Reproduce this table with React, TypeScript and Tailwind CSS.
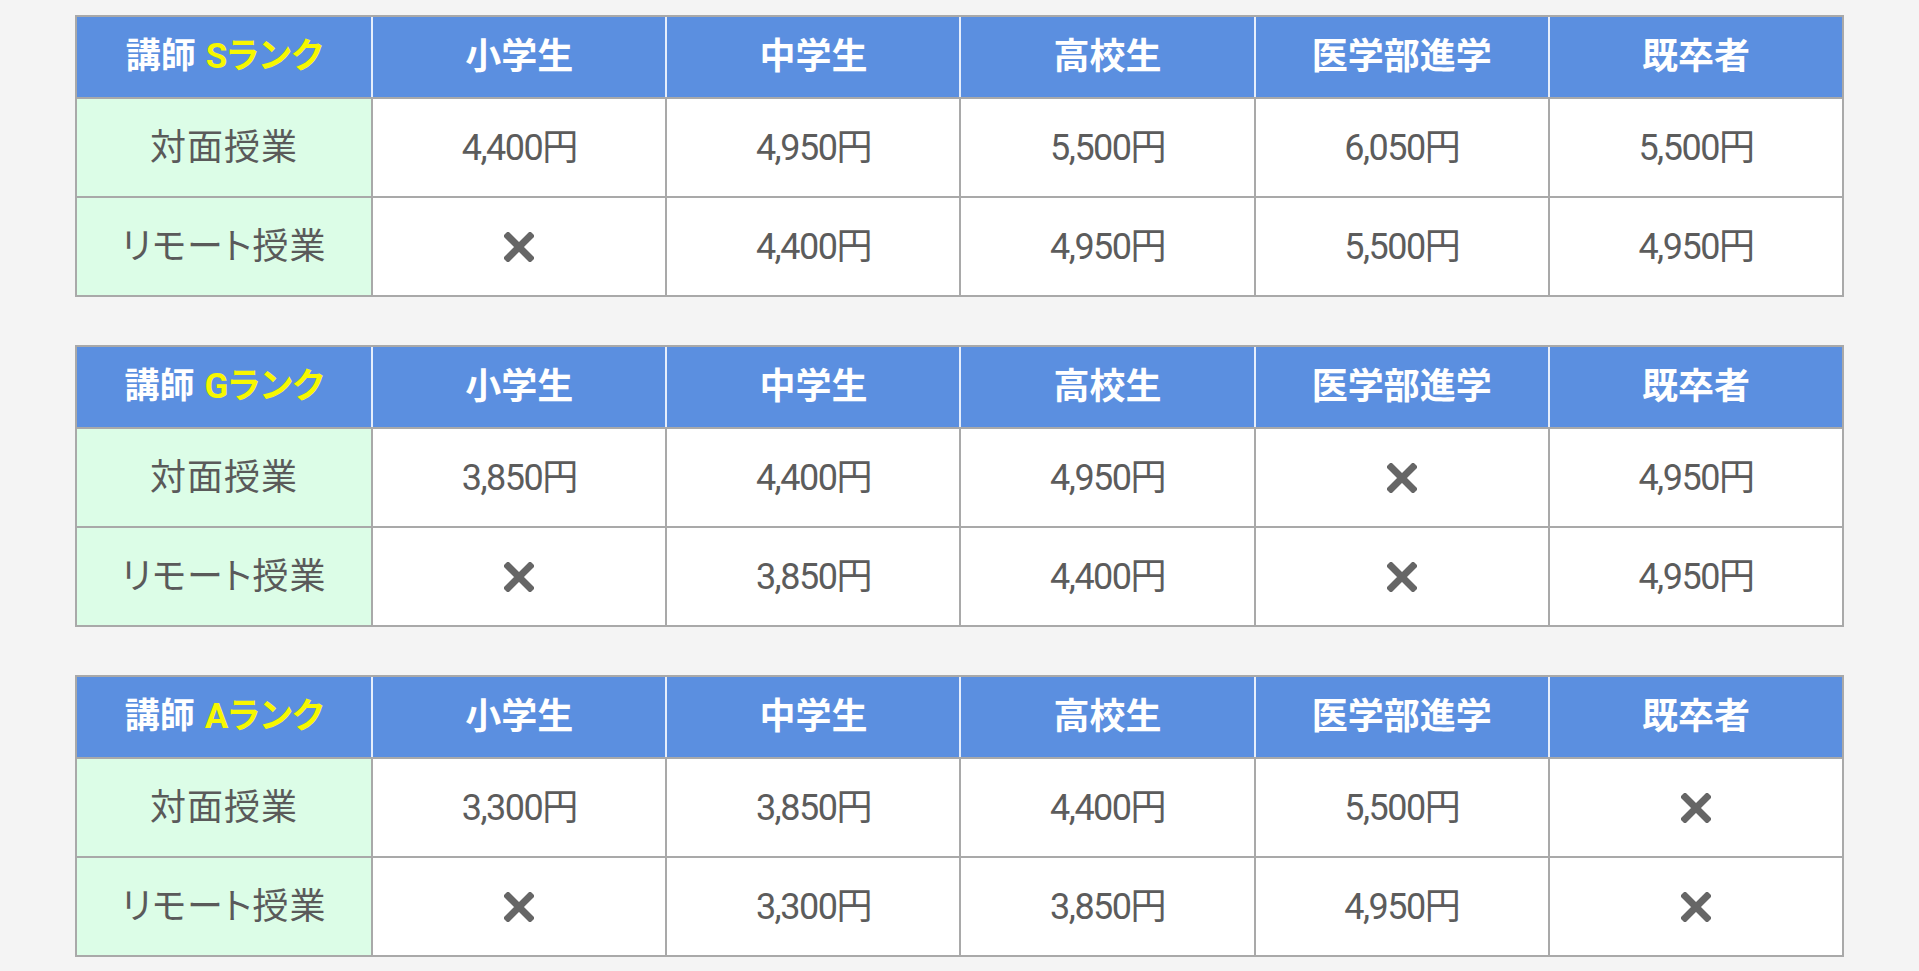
import React from 'react';

type Cell = string | null;

interface PriceTable {
  rank: string;
  inPerson: Cell[];
  remote: Cell[];
}

const grades = ['小学生', '中学生', '高校生', '医学部進学', '既卒者'];

const tables: PriceTable[] = [
  {
    rank: 'S',
    inPerson: ['4,400円', '4,950円', '5,500円', '6,050円', '5,500円'],
    remote: [null, '4,400円', '4,950円', '5,500円', '4,950円'],
  },
  {
    rank: 'G',
    inPerson: ['3,850円', '4,400円', '4,950円', null, '4,950円'],
    remote: [null, '3,850円', '4,400円', null, '4,950円'],
  },
  {
    rank: 'A',
    inPerson: ['3,300円', '3,850円', '4,400円', '5,500円', null],
    remote: [null, '3,300円', '3,850円', '4,950円', null],
  },
];

const Cross = () => (
  <svg width="30" height="30" viewBox="0 0 30 30" aria-label="×">
    <path d="M4 4 L26 26 M26 4 L4 26" stroke="#666666" strokeWidth="7" strokeLinecap="square" />
  </svg>
);

const BodyRow = ({ label, cells }: { label: string; cells: Cell[] }) => (
  <div className="grid grid-cols-6 h-[99px] border-t-2 border-[#a9a9a9]">
    <div className="flex items-center justify-center bg-[#dcfde7] text-[36px] text-[#5a5a5a] [font-feature-settings:'palt'] tracking-[1px]">
      {label}
    </div>
    {cells.map((c, i) => (
      <div
        key={i}
        className="flex items-center justify-center bg-white border-l-2 border-[#a9a9a9] text-[36px] tracking-[-1.5px] text-[#5c5c5c]"
      >
        {c === null ? <Cross /> : c}
      </div>
    ))}
  </div>
);

const RankTable = ({ table }: { table: PriceTable }) => (
  <div className="border-2 border-[#a9a9a9]">
    {/* header */}
    <div className="grid grid-cols-6 h-[80px] bg-[#5b8fe0]">
      <div className="flex items-center justify-center text-[35px] font-bold text-white">
        <span>講師</span>
        <span className="ml-[10px] text-[#f7f700] [font-feature-settings:'palt']">{table.rank}ランク</span>
      </div>
      {grades.map((g) => (
        <div
          key={g}
          className="flex items-center justify-center border-l-2 border-[#e6eefc] text-[36px] font-bold text-white"
        >
          {g}
        </div>
      ))}
    </div>
    <BodyRow label="対面授業" cells={table.inPerson} />
    <BodyRow label="リモート授業" cells={table.remote} />
  </div>
);

export default function App() {
  return (
    <div
      className="min-h-screen bg-[#f4f4f4] px-[75px] pt-[15px] flex flex-col gap-[48px]"
      style={{ fontFamily: 'Roboto, "Noto Sans CJK JP", sans-serif' }}
    >
      {tables.map((t) => (
        <RankTable key={t.rank} table={t} />
      ))}
    </div>
  );
}
